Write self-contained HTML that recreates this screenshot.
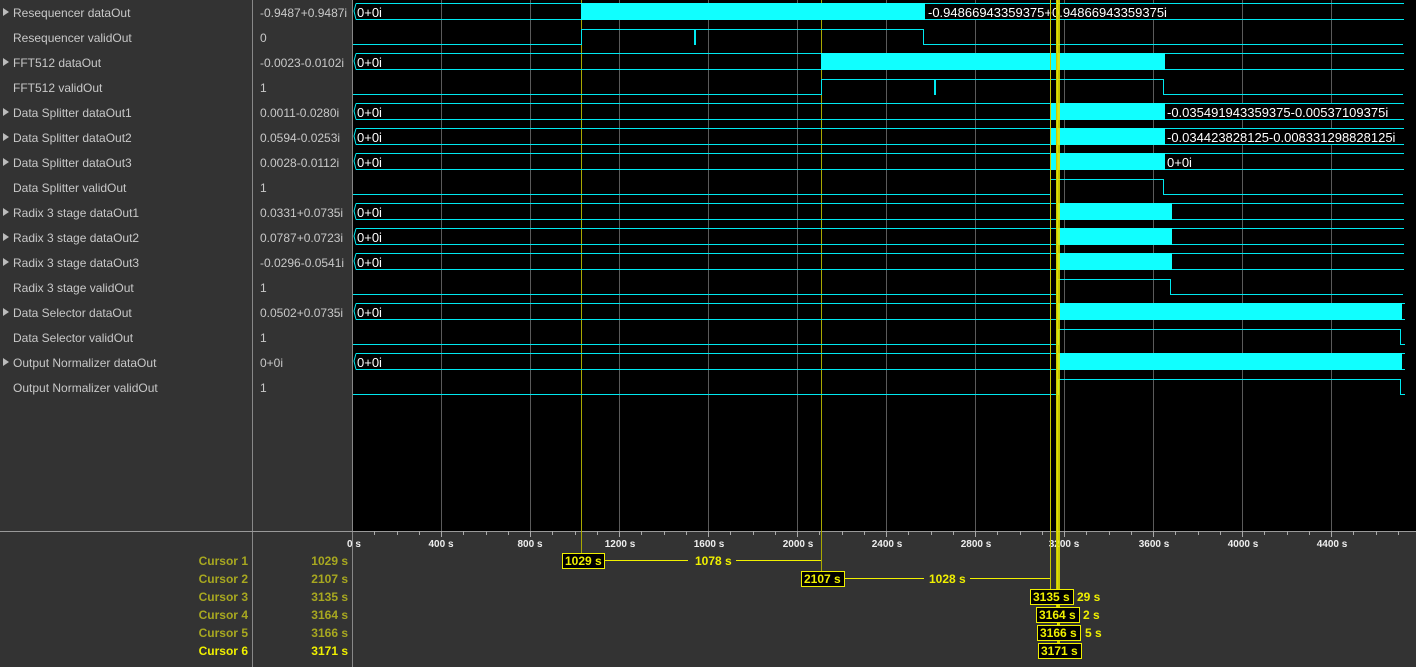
<!DOCTYPE html>
<html><head><meta charset="utf-8"><style>
html,body{margin:0;padding:0;background:#333;width:1416px;height:667px;overflow:hidden}
svg{display:block}
text{font-family:"Liberation Sans",Arial,sans-serif}
</style></head><body>
<svg width="1416" height="667" xmlns="http://www.w3.org/2000/svg">
<rect x="0" y="0" width="1416" height="667" fill="#333"/>
<rect x="353" y="0" width="1063" height="531" fill="#000"/>
<g stroke="#5a5a5a" stroke-width="1">
<line x1="441.5" y1="0" x2="441.5" y2="531"/><line x1="530.5" y1="0" x2="530.5" y2="531"/><line x1="619.5" y1="0" x2="619.5" y2="531"/><line x1="708.5" y1="0" x2="708.5" y2="531"/><line x1="797.5" y1="0" x2="797.5" y2="531"/><line x1="886.5" y1="0" x2="886.5" y2="531"/><line x1="975.5" y1="0" x2="975.5" y2="531"/><line x1="1064.5" y1="0" x2="1064.5" y2="531"/><line x1="1153.5" y1="0" x2="1153.5" y2="531"/><line x1="1242.5" y1="0" x2="1242.5" y2="531"/><line x1="1331.5" y1="0" x2="1331.5" y2="531"/>
</g>
<line x1="252.5" y1="0" x2="252.5" y2="667" stroke="#888"/>
<line x1="352.5" y1="0" x2="352.5" y2="667" stroke="#888"/>
<line x1="0" y1="531.5" x2="1416" y2="531.5" stroke="#999"/>
<g stroke="#aaa">
<line x1="374.5" y1="531" x2="374.5" y2="535"/><line x1="397.5" y1="531" x2="397.5" y2="535"/><line x1="419.5" y1="531" x2="419.5" y2="535"/><line x1="441.5" y1="531" x2="441.5" y2="537"/>
<line x1="463.5" y1="531" x2="463.5" y2="535"/><line x1="486.5" y1="531" x2="486.5" y2="535"/><line x1="508.5" y1="531" x2="508.5" y2="535"/><line x1="530.5" y1="531" x2="530.5" y2="537"/>
<line x1="552.5" y1="531" x2="552.5" y2="535"/><line x1="575.5" y1="531" x2="575.5" y2="535"/><line x1="597.5" y1="531" x2="597.5" y2="535"/><line x1="619.5" y1="531" x2="619.5" y2="537"/>
<line x1="641.5" y1="531" x2="641.5" y2="535"/><line x1="664.5" y1="531" x2="664.5" y2="535"/><line x1="686.5" y1="531" x2="686.5" y2="535"/><line x1="708.5" y1="531" x2="708.5" y2="537"/>
<line x1="730.5" y1="531" x2="730.5" y2="535"/><line x1="753.5" y1="531" x2="753.5" y2="535"/><line x1="775.5" y1="531" x2="775.5" y2="535"/><line x1="797.5" y1="531" x2="797.5" y2="537"/>
<line x1="819.5" y1="531" x2="819.5" y2="535"/><line x1="842.5" y1="531" x2="842.5" y2="535"/><line x1="864.5" y1="531" x2="864.5" y2="535"/><line x1="886.5" y1="531" x2="886.5" y2="537"/>
<line x1="908.5" y1="531" x2="908.5" y2="535"/><line x1="931.5" y1="531" x2="931.5" y2="535"/><line x1="953.5" y1="531" x2="953.5" y2="535"/><line x1="975.5" y1="531" x2="975.5" y2="537"/>
<line x1="997.5" y1="531" x2="997.5" y2="535"/><line x1="1020.5" y1="531" x2="1020.5" y2="535"/><line x1="1042.5" y1="531" x2="1042.5" y2="535"/><line x1="1064.5" y1="531" x2="1064.5" y2="537"/>
<line x1="1086.5" y1="531" x2="1086.5" y2="535"/><line x1="1109.5" y1="531" x2="1109.5" y2="535"/><line x1="1131.5" y1="531" x2="1131.5" y2="535"/><line x1="1153.5" y1="531" x2="1153.5" y2="537"/>
<line x1="1175.5" y1="531" x2="1175.5" y2="535"/><line x1="1198.5" y1="531" x2="1198.5" y2="535"/><line x1="1220.5" y1="531" x2="1220.5" y2="535"/><line x1="1242.5" y1="531" x2="1242.5" y2="537"/>
<line x1="1264.5" y1="531" x2="1264.5" y2="535"/><line x1="1287.5" y1="531" x2="1287.5" y2="535"/><line x1="1309.5" y1="531" x2="1309.5" y2="535"/><line x1="1331.5" y1="531" x2="1331.5" y2="537"/>
<line x1="1353.5" y1="531" x2="1353.5" y2="535"/><line x1="1376.5" y1="531" x2="1376.5" y2="535"/><line x1="1398.5" y1="531" x2="1398.5" y2="535"/>
</g>
<g fill="#eee" font-size="10" font-weight="bold" text-anchor="middle">
<text x="354" y="547">0 s</text><text x="441" y="547">400 s</text><text x="530" y="547">800 s</text><text x="620" y="547">1200 s</text><text x="709" y="547">1600 s</text><text x="798" y="547">2000 s</text><text x="887" y="547">2400 s</text><text x="976" y="547">2800 s</text><text x="1064" y="547">3200 s</text><text x="1154" y="547">3600 s</text><text x="1243" y="547">4000 s</text><text x="1332" y="547">4400 s</text>
</g>
<g fill="#c8c8c8" font-size="12">
<text x="13" y="17">Resequencer dataOut</text>
<text x="13" y="42">Resequencer validOut</text>
<text x="13" y="67">FFT512 dataOut</text>
<text x="13" y="92">FFT512 validOut</text>
<text x="13" y="117">Data Splitter dataOut1</text>
<text x="13" y="142">Data Splitter dataOut2</text>
<text x="13" y="167">Data Splitter dataOut3</text>
<text x="13" y="192">Data Splitter validOut</text>
<text x="13" y="217">Radix 3 stage dataOut1</text>
<text x="13" y="242">Radix 3 stage dataOut2</text>
<text x="13" y="267">Radix 3 stage dataOut3</text>
<text x="13" y="292">Radix 3 stage validOut</text>
<text x="13" y="317">Data Selector dataOut</text>
<text x="13" y="342">Data Selector validOut</text>
<text x="13" y="367">Output Normalizer dataOut</text>
<text x="13" y="392">Output Normalizer validOut</text>
<text x="260" y="17">-0.9487+0.9487i</text>
<text x="260" y="42">0</text>
<text x="260" y="67">-0.0023-0.0102i</text>
<text x="260" y="92">1</text>
<text x="260" y="117">0.0011-0.0280i</text>
<text x="260" y="142">0.0594-0.0253i</text>
<text x="260" y="167">0.0028-0.0112i</text>
<text x="260" y="192">1</text>
<text x="260" y="217">0.0331+0.0735i</text>
<text x="260" y="242">0.0787+0.0723i</text>
<text x="260" y="267">-0.0296-0.0541i</text>
<text x="260" y="292">1</text>
<text x="260" y="317">0.0502+0.0735i</text>
<text x="260" y="342">1</text>
<text x="260" y="367">0+0i</text>
<text x="260" y="392">1</text>
</g>
<g fill="#bbb">
<path d="M3 8 L9 12 L3 16Z"/><path d="M3 58 L9 62 L3 66Z"/><path d="M3 108 L9 112 L3 116Z"/><path d="M3 133 L9 137 L3 141Z"/><path d="M3 158 L9 162 L3 166Z"/><path d="M3 208 L9 212 L3 216Z"/><path d="M3 233 L9 237 L3 241Z"/><path d="M3 258 L9 262 L3 266Z"/><path d="M3 308 L9 312 L3 316Z"/><path d="M3 358 L9 362 L3 366Z"/>
</g>
<g stroke="#a8a800" stroke-width="1">
<line x1="581.5" y1="0" x2="581.5" y2="553"/>
<line x1="821.5" y1="0" x2="821.5" y2="571"/>
</g>
<g stroke="#00e8f0" stroke-width="1" fill="none">
<path d="M356 3.5H1404M356 19.5H1404M356 3.5 L354 11 L356 19.5"/>
<path d="M356 53.5H1404M356 69.5H1404M356 53.5 L354 61 L356 69.5"/>
<path d="M356 103.5H1404M356 119.5H1404M356 103.5 L354 111 L356 119.5"/>
<path d="M356 128.5H1404M356 144.5H1404M356 128.5 L354 136 L356 144.5"/>
<path d="M356 153.5H1404M356 169.5H1404M356 153.5 L354 161 L356 169.5"/>
<path d="M356 203.5H1404M356 219.5H1404M356 203.5 L354 211 L356 219.5"/>
<path d="M356 228.5H1404M356 244.5H1404M356 228.5 L354 236 L356 244.5"/>
<path d="M356 253.5H1404M356 269.5H1404M356 253.5 L354 261 L356 269.5"/>
<path d="M356 303.5H1405M356 319.5H1405M356 303.5 L354 311 L356 319.5"/>
<path d="M356 353.5H1405M356 369.5H1405M356 353.5 L354 361 L356 369.5"/>
<path d="M353 44.5H581.5V29.5H923.5V44.5H1403"/>
<path d="M353 94.5H821.5V79.5H1163.5V94.5H1403"/>
<path d="M353 194.5H1050.5V179.5H1163.5V194.5H1403"/>
<path d="M353 294.5H1057.5V279.5H1170.5V294.5H1403"/>
<path d="M353 344.5H1058.5V329.5H1400.5V344.5H1405"/>
<path d="M353 394.5H1058.5V379.5H1400.5V394.5H1405"/>
</g>
<g stroke="#00e8f0" stroke-width="2">
<line x1="695" y1="29" x2="695" y2="45"/>
<line x1="935" y1="79" x2="935" y2="95"/>
</g>
<g fill="#10ffff">
<rect x="581" y="3" width="344" height="17"/>
<rect x="821" y="53" width="344" height="17"/>
<rect x="1050" y="103" width="115" height="17"/>
<rect x="1050" y="128" width="115" height="17"/>
<rect x="1050" y="153" width="115" height="17"/>
<rect x="1057" y="203" width="115" height="17"/>
<rect x="1057" y="228" width="115" height="17"/>
<rect x="1057" y="253" width="115" height="17"/>
<rect x="1058" y="303" width="344" height="17"/>
<rect x="1058" y="353" width="344" height="17"/>
</g>
<g fill="#000">
<rect x="925" y="4" width="265" height="15"/>
<rect x="1165" y="104" width="250" height="15"/>
<rect x="1165" y="129" width="250" height="15"/>
<rect x="1165" y="154" width="40" height="15"/>
</g>
<g fill="#fff" font-size="13">
<text x="357" y="17">0+0i</text><text x="357" y="67">0+0i</text><text x="357" y="117">0+0i</text><text x="357" y="142">0+0i</text><text x="357" y="167">0+0i</text><text x="357" y="217">0+0i</text><text x="357" y="242">0+0i</text><text x="357" y="267">0+0i</text><text x="357" y="317">0+0i</text><text x="357" y="367">0+0i</text>
<text x="928" y="17">-0.94866943359375+0.94866943359375i</text>
<text x="1167" y="117">-0.035491943359375-0.00537109375i</text>
<text x="1167" y="142">-0.034423828125-0.008331298828125i</text>
<text x="1167" y="167">0+0i</text>
</g>
<line x1="1050.5" y1="0" x2="1050.5" y2="589" stroke="#c8c800" stroke-width="1"/>
<line x1="1056.5" y1="0" x2="1056.5" y2="607" stroke="#c8c800" stroke-width="1"/>
<line x1="1057.5" y1="0" x2="1057.5" y2="625" stroke="#b0b000" stroke-width="1"/>
<rect x="1057" y="0" width="3" height="643" fill="#e6e600" opacity="0.85"/>
<g fill="#a8a820" font-size="12" font-weight="bold" text-anchor="end">
<text x="248" y="565">Cursor 1</text><text x="248" y="583">Cursor 2</text><text x="248" y="601">Cursor 3</text><text x="248" y="619">Cursor 4</text><text x="248" y="637">Cursor 5</text>
<text x="348" y="565">1029 s</text><text x="348" y="583">2107 s</text><text x="348" y="601">3135 s</text><text x="348" y="619">3164 s</text><text x="348" y="637">3166 s</text>
</g>
<g fill="#f0f000" font-size="12" font-weight="bold" text-anchor="end">
<text x="248" y="655">Cursor 6</text><text x="348" y="655">3171 s</text>
</g>
<g stroke="#f0f000" stroke-width="1">
<line x1="605" y1="560.5" x2="821" y2="560.5"/>
<line x1="845" y1="578.5" x2="1050" y2="578.5"/>
</g>
<g fill="#000" stroke="#f0f000" stroke-width="1">
<rect x="562.5" y="553.5" width="42" height="15"/>
<rect x="801.5" y="571.5" width="43" height="15"/>
<rect x="1030.5" y="589.5" width="43" height="15"/>
<rect x="1036.5" y="607.5" width="43" height="15"/>
<rect x="1037.5" y="625.5" width="43" height="15"/>
<rect x="1038.5" y="643.5" width="43" height="15"/>
</g>
<rect x="688" y="553" width="48" height="15" fill="#333"/>
<rect x="924" y="571" width="46" height="15" fill="#333"/>
<g fill="#f0f000" font-size="12" font-weight="bold">
<text x="565" y="565">1029 s</text>
<text x="804" y="583">2107 s</text>
<text x="1033" y="601">3135 s</text>
<text x="1039" y="619">3164 s</text>
<text x="1040" y="637">3166 s</text>
<text x="1041" y="655">3171 s</text>
<text x="695" y="565">1078 s</text>
<text x="929" y="583">1028 s</text>
<text x="1077" y="601">29 s</text>
<text x="1083" y="619">2 s</text>
<text x="1085" y="637">5 s</text>
</g>
</svg>
</body></html>
